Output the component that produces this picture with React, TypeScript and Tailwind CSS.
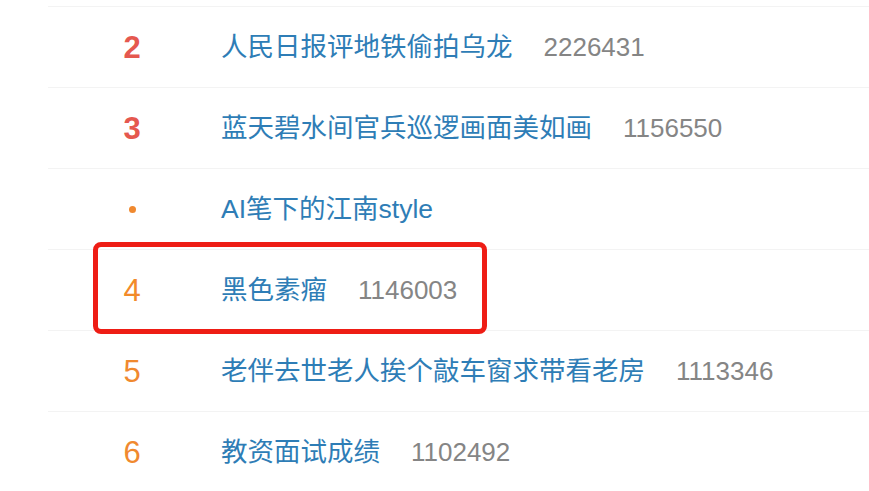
import React from "react";

type Row = { rank: string; title: string; num?: string; color: string; weight: string };

const rows: Row[] = [
  { rank: "2", title: "人民日报评地铁偷拍乌龙", num: "2226431", color: "text-[#e5584f]", weight: "font-bold" },
  { rank: "3", title: "蓝天碧水间官兵巡逻画面美如画", num: "1156550", color: "text-[#e5584f]", weight: "font-bold" },
  { rank: "•", title: "AI笔下的江南style", color: "text-[#f0892f]", weight: "font-normal" },
  { rank: "4", title: "黑色素瘤", num: "1146003", color: "text-[#f28a2a]", weight: "font-normal" },
  { rank: "5", title: "老伴去世老人挨个敲车窗求带看老房", num: "1113346", color: "text-[#f0892f]", weight: "font-normal" },
  { rank: "6", title: "教资面试成绩", num: "1102492", color: "text-[#f0892f]", weight: "font-normal" },
];

export default function App() {
  return (
    <div
      className="relative w-[869px] h-[491px] bg-white overflow-hidden"
      style={{ fontFamily: '"Liberation Sans", "Noto Sans CJK SC", sans-serif' }}
    >
      <div className="pt-[6px] pl-[48px]">
        {rows.map((r, i) => (
          <div key={i} className="flex items-center h-[81px] border-t border-[#f3f3f3]">
            <div className="w-[168px] shrink-0 flex justify-center">
              {r.rank === "•" ? (
                <span className="block w-[7px] h-[7px] rounded-full bg-[#f0892f]" />
              ) : (
                <span className={`text-[31px] leading-none ${r.color} ${r.weight}`}>{r.rank}</span>
              )}
            </div>
            <div className="ml-[5px] flex items-center">
              <span className="text-[26.5px] leading-none text-[#2e7db6] whitespace-nowrap">{r.title}</span>
              {r.num && (
                <span className="ml-[31px] text-[26px] leading-none text-[#858585]">{r.num}</span>
              )}
            </div>
          </div>
        ))}
      </div>
      <div className="absolute left-[93px] top-[242px] w-[394px] h-[92px] border-[5px] border-[#ee1d15] rounded-[8px]" />
    </div>
  );
}
